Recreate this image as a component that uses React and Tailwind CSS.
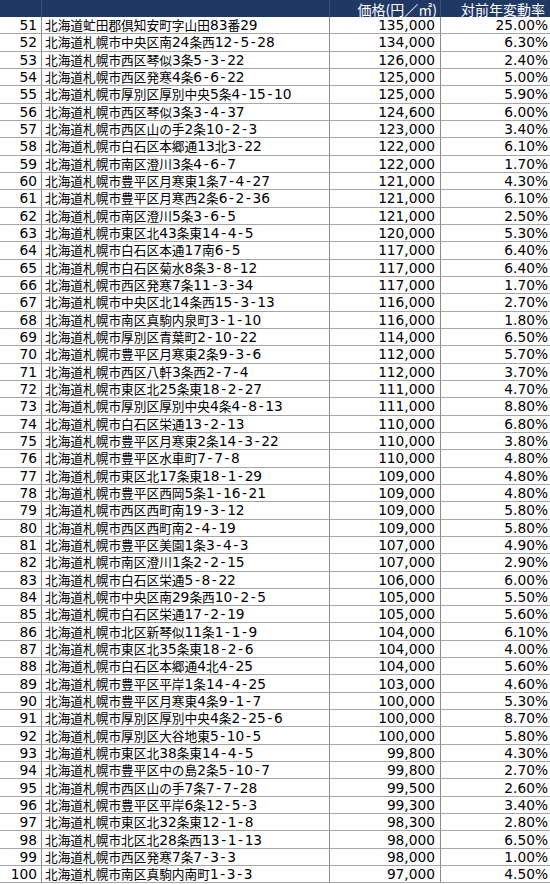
const rows = [
  [51, "北海道虻田郡倶知安町字山田83番29", "135,000", "25.00%"],
  [52, "北海道札幌市中央区南24条西12-5-28", "134,000", "6.30%"],
  [53, "北海道札幌市西区琴似3条5-3-22", "126,000", "2.40%"],
  [54, "北海道札幌市西区発寒4条6-6-22", "125,000", "5.00%"],
  [55, "北海道札幌市厚別区厚別中央5条4-15-10", "125,000", "5.90%"],
  [56, "北海道札幌市西区琴似3条3-4-37", "124,600", "6.00%"],
  [57, "北海道札幌市西区山の手2条10-2-3", "123,000", "3.40%"],
  [58, "北海道札幌市白石区本郷通13北3-22", "122,000", "6.10%"],
  [59, "北海道札幌市南区澄川3条4-6-7", "122,000", "1.70%"],
  [60, "北海道札幌市豊平区月寒東1条7-4-27", "121,000", "4.30%"],
  [61, "北海道札幌市豊平区月寒西2条6-2-36", "121,000", "6.10%"],
  [62, "北海道札幌市南区澄川5条3-6-5", "121,000", "2.50%"],
  [63, "北海道札幌市東区北43条東14-4-5", "120,000", "5.30%"],
  [64, "北海道札幌市白石区本通17南6-5", "117,000", "6.40%"],
  [65, "北海道札幌市白石区菊水8条3-8-12", "117,000", "6.40%"],
  [66, "北海道札幌市西区発寒7条11-3-34", "117,000", "1.70%"],
  [67, "北海道札幌市中央区北14条西15-3-13", "116,000", "2.70%"],
  [68, "北海道札幌市南区真駒内泉町3-1-10", "116,000", "1.80%"],
  [69, "北海道札幌市厚別区青葉町2-10-22", "114,000", "6.50%"],
  [70, "北海道札幌市豊平区月寒東2条9-3-6", "112,000", "5.70%"],
  [71, "北海道札幌市西区八軒3条西2-7-4", "112,000", "3.70%"],
  [72, "北海道札幌市東区北25条東18-2-27", "111,000", "4.70%"],
  [73, "北海道札幌市厚別区厚別中央4条4-8-13", "111,000", "8.80%"],
  [74, "北海道札幌市白石区栄通13-2-13", "110,000", "6.80%"],
  [75, "北海道札幌市豊平区月寒東2条14-3-22", "110,000", "3.80%"],
  [76, "北海道札幌市豊平区水車町7-7-8", "110,000", "4.80%"],
  [77, "北海道札幌市東区北17条東18-1-29", "109,000", "4.80%"],
  [78, "北海道札幌市豊平区西岡5条1-16-21", "109,000", "4.80%"],
  [79, "北海道札幌市西区西町南19-3-12", "109,000", "5.80%"],
  [80, "北海道札幌市西区西町南2-4-19", "109,000", "5.80%"],
  [81, "北海道札幌市豊平区美園1条3-4-3", "107,000", "4.90%"],
  [82, "北海道札幌市南区澄川1条2-2-15", "107,000", "2.90%"],
  [83, "北海道札幌市白石区栄通5-8-22", "106,000", "6.00%"],
  [84, "北海道札幌市中央区南29条西10-2-5", "105,000", "5.50%"],
  [85, "北海道札幌市白石区栄通17-2-19", "105,000", "5.60%"],
  [86, "北海道札幌市北区新琴似11条1-1-9", "104,000", "6.10%"],
  [87, "北海道札幌市東区北35条東18-2-6", "104,000", "4.00%"],
  [88, "北海道札幌市白石区本郷通4北4-25", "104,000", "5.60%"],
  [89, "北海道札幌市豊平区平岸1条14-4-25", "103,000", "4.60%"],
  [90, "北海道札幌市豊平区月寒東4条9-1-7", "100,000", "5.30%"],
  [91, "北海道札幌市厚別区厚別中央4条2-25-6", "100,000", "8.70%"],
  [92, "北海道札幌市厚別区大谷地東5-10-5", "100,000", "5.80%"],
  [93, "北海道札幌市東区北38条東14-4-5", "99,800", "4.30%"],
  [94, "北海道札幌市豊平区中の島2条5-10-7", "99,800", "2.70%"],
  [95, "北海道札幌市西区山の手7条7-7-28", "99,500", "2.60%"],
  [96, "北海道札幌市豊平区平岸6条12-5-3", "99,300", "3.40%"],
  [97, "北海道札幌市東区北32条東12-1-8", "98,300", "2.80%"],
  [98, "北海道札幌市北区北28条西13-1-13", "98,000", "6.50%"],
  [99, "北海道札幌市西区発寒7条7-3-3", "98,000", "1.00%"],
  [100, "北海道札幌市南区真駒内南町1-3-3", "97,000", "4.50%"],
]

// digits are wider than the kanji (Meiryo-ish), hyphens get a little air
function Mixed({ text }) {
  const parts = String(text).split(/([0-9,.%]+|-)/)
  return parts.map((p, i) => {
    if (p === "-") {
      return <span key={i} className="font-['DejaVu_Sans',sans-serif] text-[13.75px] mx-[1.6px]">-</span>
    }
    if (/^[0-9,.%]+$/.test(p)) {
      return <span key={i} className="font-['DejaVu_Sans',sans-serif] text-[13.75px]">{p}</span>
    }
    return <span key={i}>{p}</span>
  })
}

const cell = "h-[17.34px] flex items-center border-b border-[#a6a6a6] leading-[16px] whitespace-nowrap"
const head = "h-[17px] bg-[#1f3864] text-white flex items-center justify-end text-[14px] leading-[17px]"

export default function App() {
  return (
    <div className="w-[550px] h-[884px] bg-white text-black font-['Noto_Sans_CJK_JP',sans-serif] text-[12.7px]">
      <div className="grid grid-cols-[42px_288px_111px_109px]">
        <div className={head + " border-r border-[#3b4f78]"}></div>
        <div className={head + " border-r border-[#3b4f78]"}></div>
        <div className={head + " border-r border-[#3b4f78] pr-[3px] pt-[1px]"}>価格(円／㎡)</div>
        <div className={head + " pr-[5px] pt-[1px]"}>対前年変動率</div>

        {rows.map(([n, addr, price, rate]) => (
          <div key={n} className="contents">
            <div className={cell + " justify-end pr-[4px] border-r border-r-[#8c8c8c]"}>
              <Mixed text={n} />
            </div>
            <div className={cell + " pl-[3px] border-r border-r-[#8c8c8c]"}>
              <Mixed text={addr} />
            </div>
            <div className={cell + " justify-end pr-[5px] border-r border-r-[#8c8c8c]"}>
              <Mixed text={price} />
            </div>
            <div className={cell + " justify-end pr-[2px]"}>
              <Mixed text={rate} />
            </div>
          </div>
        ))}
      </div>
    </div>
  )
}
